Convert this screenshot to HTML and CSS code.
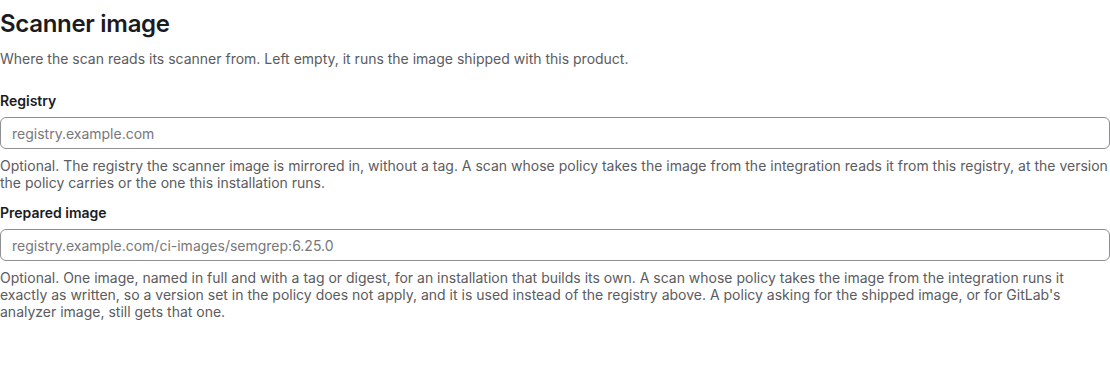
FILE: index.html
```html
<!DOCTYPE html>
<html>
<head>
<meta charset="utf-8">
<link rel="stylesheet" href="styles.css">
</head>
<body>
<section class="panel">
  <h2 class="title">Scanner image</h2>
  <p class="intro">Where the scan reads its scanner from. Left empty, it runs the image shipped with this product.</p>
  <div class="field">
    <label class="label" for="registry">Registry</label>
    <input class="input" id="registry" type="text" placeholder="registry.example.com">
    <p class="help">Optional. The registry the scanner image is mirrored in, without a tag. A scan whose policy takes the image from the integration reads it from this registry, at the version the policy carries or the one this installation runs.</p>
  </div>
  <div class="field">
    <label class="label" for="prepared">Prepared image</label>
    <input class="input" id="prepared" type="text" placeholder="registry.example.com/ci-images/semgrep:6.25.0">
    <p class="help">Optional. One image, named in full and with a tag or digest, for an installation that builds its own. A scan whose policy takes the image from the integration runs it exactly as written, so a version set in the policy does not apply, and it is used instead of the registry above. A policy asking for the shipped image, or for GitLab's analyzer image, still gets that one.</p>
  </div>
</section>
</body>
</html>
```
FILE: styles.css
```css
html, body {
  margin: 0;
  padding: 0;
  background: #fff;
}
body {
  font-family: Inter, "Noto Sans", sans-serif;
  color: #1f1f23;
}
.panel {
  display: flex;
  flex-direction: column;
  padding-top: 9px;
}
.title {
  margin: 0;
  font-size: 24px;
  line-height: 30px;
  font-weight: 600;
  letter-spacing: -0.3px;
  color: #1b1b1f;
}
.intro {
  margin: 11px 0 0;
  font-size: 14px;
  line-height: 17px;
  color: #5b5b60;
}
.field {
  display: flex;
  flex-direction: column;
  margin-top: 25px;
}
.field + .field {
  margin-top: 13px;
}
.label {
  font-size: 14px;
  line-height: 17px;
  font-weight: 600;
  color: #1b1b1f;
}
.input {
  box-sizing: border-box;
  margin-top: 8px;
  width: 100%;
  height: 32px;
  padding: 0 11px;
  border: 1px solid #8f8f94;
  border-radius: 6px;
  font-family: inherit;
  font-size: 14px;
  color: #1b1b1f;
  background: #fff;
}
.input::placeholder {
  color: #77777c;
}
.help {
  margin: 8px 0 0;
  font-size: 14px;
  line-height: 17px;
  color: #5b5b60;
}
```
